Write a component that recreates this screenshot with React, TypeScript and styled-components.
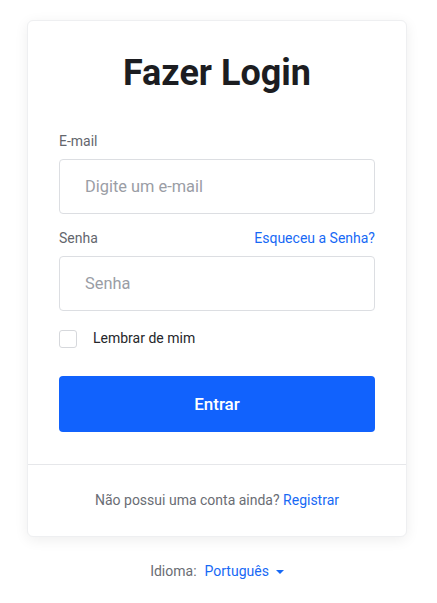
import styled, { createGlobalStyle } from 'styled-components';

const GlobalStyle = createGlobalStyle`
  body {
    margin: 0;
    background: #ffffff;
    font-family: Roboto, "Liberation Sans", Arial, sans-serif;
    -webkit-font-smoothing: antialiased;
  }
  * {
    box-sizing: border-box;
  }
`;

export default function App() {
  return (
    <Page>
      <GlobalStyle />
      <Card>
        <CardBody>
          <Title>Fazer Login</Title>
          <Field>
            <LabelRow>
              <Label htmlFor="email">E-mail</Label>
            </LabelRow>
            <Input id="email" type="email" placeholder="Digite um e-mail" />
          </Field>
          <Field>
            <LabelRow>
              <Label htmlFor="password">Senha</Label>
              <Link href="#">Esqueceu a Senha?</Link>
            </LabelRow>
            <Input id="password" type="password" placeholder="Senha" />
          </Field>
          <Remember>
            <Check type="checkbox" />
            <span>Lembrar de mim</span>
          </Remember>
          <SubmitButton type="button">Entrar</SubmitButton>
        </CardBody>
        <CardFooter>
          Não possui uma conta ainda? <Link href="#">Registrar</Link>
        </CardFooter>
      </Card>
      <Language>
        Idioma:
        <LanguagePicker href="#">
          Português
          <Caret />
        </LanguagePicker>
      </Language>
    </Page>
  );
}

const Page = styled.div`
  padding: 20px 3px 0 0;
  display: flex;
  flex-direction: column;
  align-items: center;
`;

const Card = styled.div`
  width: 380px;
  background: #fff;
  border: 1px solid #eeeff1;
  border-radius: 6px;
  box-shadow: 0 3px 14px rgba(0, 0, 0, 0.07);
`;

const CardBody = styled.div`
  padding: 31px 31px 32px;
  display: flex;
  flex-direction: column;
`;

const Title = styled.h1`
  margin: 0 0 36px;
  text-align: center;
  font-size: 36px;
  line-height: 43px;
  font-weight: 700;
  color: #1c1d21;
`;

const Field = styled.div`
  display: flex;
  flex-direction: column;
  gap: 7px;
  margin-bottom: 14px;
`;

const LabelRow = styled.div`
  display: flex;
  justify-content: space-between;
  align-items: center;
`;

const Label = styled.label`
  font-size: 14px;
  line-height: 21px;
  color: #63666d;
`;

const Link = styled.a`
  font-size: 14px;
  line-height: 21px;
  color: #1769f5;
  text-decoration: none;
`;

const Input = styled.input`
  height: 55px;
  width: 100%;
  padding: 0 25px;
  border: 1px solid #dcdee2;
  border-radius: 4px;
  font-family: inherit;
  font-size: 16.4px;
  color: #212529;
  outline: none;
  &::placeholder {
    color: #9a9da5;
  }
`;

const Remember = styled.label`
  display: flex;
  align-items: center;
  gap: 16px;
  margin-top: 3px;
  font-size: 14px;
  line-height: 21px;
  color: #25272b;
`;

const Check = styled.input`
  appearance: none;
  margin: 0;
  width: 18px;
  height: 18px;
  border: 1px solid #d6d8dc;
  border-radius: 3px;
  background: #fff;
`;

const SubmitButton = styled.button`
  margin-top: 27px;
  height: 56px;
  width: 100%;
  border: none;
  border-radius: 4px;
  background: #1162fd;
  color: #fff;
  font-family: inherit;
  font-size: 17px;
  font-weight: 500;
  cursor: pointer;
`;

const CardFooter = styled.div`
  border-top: 1px solid #e6e7ea;
  padding: 25px 0 25px;
  text-align: center;
  font-size: 14px;
  line-height: 21px;
  color: #6a6d74;
`;

const Language = styled.div`
  margin-top: 24px;
  display: flex;
  align-items: center;
  gap: 8px;
  font-size: 14px;
  line-height: 21px;
  color: #6a6d74;
`;

const LanguagePicker = styled.a`
  display: flex;
  align-items: center;
  gap: 7px;
  color: #1769f5;
  text-decoration: none;
`;

const Caret = styled.span`
  width: 0;
  height: 0;
  border-left: 4px solid transparent;
  border-right: 4px solid transparent;
  border-top: 4px solid #1769f5;
`;
